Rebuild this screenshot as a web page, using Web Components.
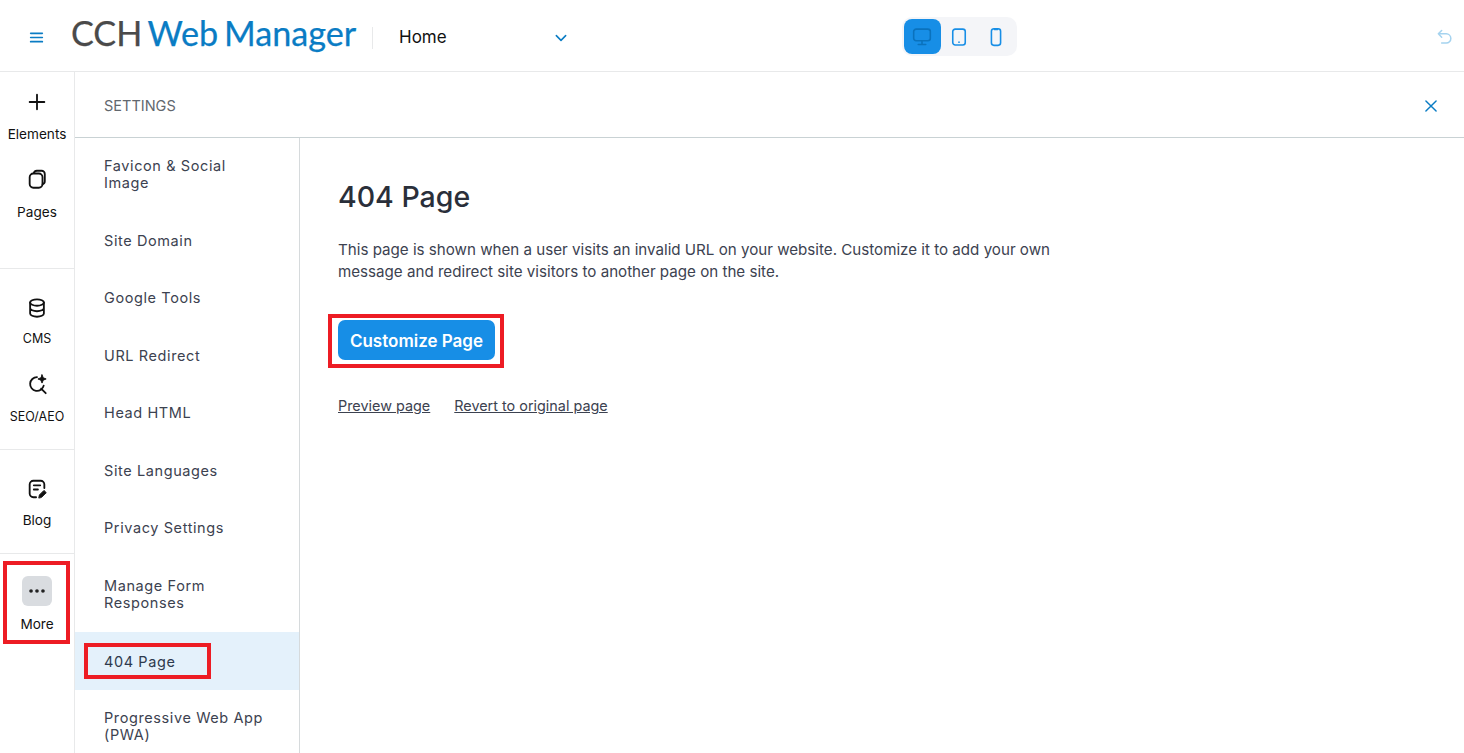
<!doctype html>
<html lang="en"><head><meta charset="utf-8"><title>CCH Web Manager</title>
<style>
html,body{margin:0;height:100%;overflow:hidden;background:#fff}
body{font-family:"Inter","Noto Sans",sans-serif}
</style></head><body>
<wm-app></wm-app>
<script>
const ICONS={
menu:'<path d="M2 4h14M2 9h14M2 14h14" stroke-width="2"/>',
chev:'<path d="M3 6l6 6 6-6" stroke-width="2"/>',
desk:'<rect x="2" y="2.5" width="20" height="14" rx="3"/><path d="M12 17v3.5M7.5 21h9"/>',
tab:'<rect x="4.5" y="2.5" width="15" height="19" rx="3"/><circle cx="12" cy="18.2" r="1" fill="currentColor" stroke="none"/>',
phone:'<rect x="6.5" y="2" width="11" height="20" rx="3"/><path d="M10 3h4"/>',
undo:'<path d="M8 3L4 7l4 4M4 7h9.5a5.5 5.5 0 010 11H8"/>',
x:'<path d="M4 4l14 14M18 4L4 18" stroke-width="2"/>',
plus:'<path d="M12 4v16M4 12h16" stroke-width="2"/>',
pages:'<path d="M8.5 5.500A3.500 3.500 0 0 1 12 3h5a3.500 3.500 0 0 1 3.500 3.500v8a3.500 3.500 0 0 1-2.500 3.300"/><rect x="4" y="6" width="14" height="15.500" rx="4"/>',
db:'<ellipse cx="12" cy="6" rx="7.500" ry="3.500"/><path d="M4.500 6v12c0 2 3.400 3.500 7.500 3.500s7.500-1.500 7.500-3.500V6M4.500 12c0 2 3.400 3.500 7.500 3.500s7.500-1.500 7.500-3.500"/>',
seo:'<path d="M12 4.500a7.500 7.500 0 1 0 7.300 9.300M16.500 17l5 5"/><path d="M17.500 2l1.300 3.200L22 6.500l-3.200 1.300L17.500 11l-1.300-3.200L13 6.500l3.200-1.300z" fill="currentColor" stroke-width="1"/>',
blog:'<path d="M11 21H8a4 4 0 0 1-4-4V7a4 4 0 0 1 4-4h8a4 4 0 0 1 4 4v4"/><path d="M8.500 8h7M8.500 12.500h4.500"/><path d="M14 21.500l.6-3 5-5 2.500 2.500-5 5z" fill="currentColor" stroke-width="1"/>',
dots:'<circle cx="5.500" cy="12" r="2" fill="currentColor" stroke="none"/><circle cx="12" cy="12" r="2" fill="currentColor" stroke="none"/><circle cx="18.500" cy="12" r="2" fill="currentColor" stroke="none"/>'
};
function def(name,css,html,extra){
  const t=document.createElement('template');
  t.innerHTML=`<style>${css}</style>${html}`;
  customElements.define(name,class extends HTMLElement{
    constructor(){super();this.attachShadow({mode:'open'}).appendChild(t.content.cloneNode(true));}
    connectedCallback(){extra&&extra.call(this)}
  });
}
def('wm-icon',`:host{display:inline-flex;width:var(--s,24px);height:var(--s,24px)}svg{width:100%;height:100%;fill:none;stroke:currentColor;stroke-width:var(--sw,2);stroke-linecap:round;stroke-linejoin:round}`,
 `<svg></svg>`,function(){const v=this.getAttribute('vb')||'0 0 24 24';const s=this.shadowRoot.querySelector('svg');s.setAttribute('viewBox',v);s.innerHTML=ICONS[this.getAttribute('name')];});
def('wm-annot',`:host{position:absolute;display:block;border:4px solid #ed1c24;box-sizing:border-box;pointer-events:none}`,``);

def('wm-topbar',`
:host{display:flex;align-items:center;height:67px;padding-top:4px;border-bottom:1px solid #e8e9ea;box-sizing:content-box;position:relative;padding-left:29px;padding-right:9px}
.menu{color:#0a7cc4;--s:15px;margin-right:27px}
.logo{font:400 34.200px/1 "Lato",sans-serif;color:#4a4a4a;white-space:nowrap;word-spacing:-3px;-webkit-text-stroke:.25px currentColor;width:285px;padding-bottom:8px}
.logo b{font-weight:400;color:#0a7cc4}
.sep{width:1px;height:22px;background:#e8e9ea;margin:0 26px 0 16px}
.page{font:400 17px/1 "Inter",sans-serif;color:#111;width:155px}
.chev{color:#0a7cc4;--s:14px}
.seg{display:flex;align-items:center;gap:0;margin-left:334px;margin-bottom:2px;width:115px;height:39px;background:#f4f5f8;border-radius:10px;padding:0 2px;box-sizing:border-box}
.seg span{width:37px;height:35px;display:flex;align-items:center;justify-content:center;border-radius:8px;color:#178ee6;--s:20px;--sw:1.900}
.seg wm-icon{margin-left:-2px}
.seg .on{background:#178ee6;color:#0a72bd}
.undo{margin-left:auto;color:#a5d3ef;--s:20px;--sw:1.800}
`,`<wm-icon class="menu" name="menu" vb="0 0 18 18"></wm-icon>
<div class="logo">CCH <b>Web Manager</b></div><div class="sep"></div>
<div class="page">Home</div><wm-icon class="chev" name="chev" vb="0 0 18 18"></wm-icon>
<div class="seg"><span class="on"><wm-icon name="desk"></wm-icon></span><span><wm-icon name="tab"></wm-icon></span><span><wm-icon name="phone"></wm-icon></span></div>
<wm-icon class="undo" name="undo"></wm-icon>`);

def('wm-rail-item',`
:host{display:flex;flex-direction:column;align-items:center;height:77px;color:#111;position:relative}
.ic{display:flex;align-items:center;justify-content:center;height:var(--ih,24px);margin-bottom:var(--g,12px)}
.lb{font:400 var(--fs,13.600px)/16px "Inter",sans-serif;white-space:nowrap}
`,`<div class="ic"><slot name="icon"></slot></div><div class="lb"><slot></slot></div>`);

def('wm-rail',`
:host{display:flex;flex-direction:column;width:74px;flex:none;border-right:1px solid #e8e9ea;position:relative;--s:22px}
.g{border-bottom:1px solid #e8e9ea;box-sizing:border-box;display:flex;flex-direction:column}
.g1{height:197px;padding-top:18px}
.g2{height:181px;padding-top:27px;--g:11px;--fs:12.500px}
.g3{height:104px;padding-top:27px;--g:11px}
.g4{padding-top:22px;flex:1;border:0;--g:10px;--ih:30px}
.more{width:30px;height:30px;border-radius:6px;background:#d9dce0;display:flex;align-items:center;justify-content:center;color:#222;--s:22px}
wm-annot{left:3px;top:489px;width:67px;height:83px}
`,`<div class="g g1"><wm-rail-item><wm-icon slot="icon" name="plus"></wm-icon>Elements</wm-rail-item><wm-rail-item style="--g:13px"><wm-icon slot="icon" name="pages"></wm-icon>Pages</wm-rail-item></div>
<div class="g g2"><wm-rail-item><wm-icon slot="icon" name="db"></wm-icon>CMS</wm-rail-item><wm-rail-item style="--g:12px"><wm-icon slot="icon" name="seo" style="margin-top:-2px"></wm-icon>SEO/AEO</wm-rail-item></div>
<div class="g g3"><wm-rail-item><wm-icon slot="icon" name="blog"></wm-icon>Blog</wm-rail-item></div>
<div class="g g4"><wm-rail-item><span slot="icon" class="more"><wm-icon name="dots"></wm-icon></span>More</wm-rail-item></div>
<wm-annot></wm-annot>`);

def('wm-nav-item',`
:host{display:block;padding:20.250px 30px 20.250px 29px;font:400 14.500px/17px "Inter",sans-serif;letter-spacing:.6px;color:#3c4250;position:relative}
:host([two]){padding-top:20.800px;padding-bottom:20.900px}
:host(:first-child){padding-top:19px;padding-bottom:20.700px}
:host(:last-child){padding-top:19.500px}
:host([active]){background:#e4f1fb;color:#2e3a4d}
wm-annot{display:none;left:9px;top:11px;width:127px;height:36px}
:host([active]) wm-annot{display:block}
`,`<slot></slot><wm-annot></wm-annot>`);

def('wm-nav',`:host{display:block;width:224px;flex:none;border-right:1px solid #d6dadc;overflow:hidden}`,`<slot></slot>`);

def('wm-main',`
:host{display:block;flex:1;padding:42px 38px 0;color:#2a2f3a}
h1{margin:0;font:500 28.500px/34px "Inter",sans-serif;color:#2a2f3a}
p{margin:25px 0 0;width:740px;font:400 15.150px/22px "Inter",sans-serif;color:#3c4250}
.btnwrap{position:relative;width:max-content;margin-top:37px}
button{display:block;border:0;width:157px;height:40px;border-radius:7px;background:#178ee6;color:#fff;font:600 17px/42px "Inter",sans-serif;padding:0}
wm-annot{left:-10px;top:-6px;width:176px;height:54px}
.links{display:flex;gap:24px;margin-top:37px;font:400 14.400px/18px "Inter",sans-serif;color:#3c4250}
a{color:inherit;text-decoration:underline}
`,`<h1>404 Page</h1>
<p>This page is shown when a user visits an invalid URL on your website. Customize it to add your own message and redirect site visitors to another page on the site.</p>
<div class="btnwrap"><button>Customize Page</button><wm-annot></wm-annot></div>
<div class="links"><a href="#">Preview page</a><a href="#">Revert to original page</a></div>`);

def('wm-settings',`
:host{display:flex;flex-direction:column;flex:1;min-width:0}
header{height:61px;padding:4px 25px 0 29px;flex:none;border-bottom:1px solid #c9d2d4;display:flex;align-items:center;justify-content:space-between}
.t{font:400 14.500px/1 "Inter",sans-serif;color:#62676e}
.x{color:#0a7cc4;--s:16px;margin-bottom:2px}
.b{display:flex;flex:1;min-height:0}
`,`<header><span class="t">SETTINGS</span><wm-icon class="x" name="x" vb="0 0 22 22"></wm-icon></header>
<div class="b"><wm-nav>
<wm-nav-item two>Favicon &amp; Social Image</wm-nav-item><wm-nav-item>Site Domain</wm-nav-item><wm-nav-item>Google Tools</wm-nav-item><wm-nav-item>URL Redirect</wm-nav-item><wm-nav-item>Head HTML</wm-nav-item><wm-nav-item>Site Languages</wm-nav-item><wm-nav-item>Privacy Settings</wm-nav-item><wm-nav-item two>Manage Form Responses</wm-nav-item><wm-nav-item active>404 Page</wm-nav-item><wm-nav-item two>Progressive Web App (PWA)</wm-nav-item>
</wm-nav><wm-main></wm-main></div>`);

def('wm-app',`:host{display:flex;flex-direction:column;height:753px;overflow:hidden}.r{display:flex;flex:1;min-height:0}`,
`<wm-topbar></wm-topbar><div class="r"><wm-rail></wm-rail><wm-settings></wm-settings></div>`);
</script></body></html>
